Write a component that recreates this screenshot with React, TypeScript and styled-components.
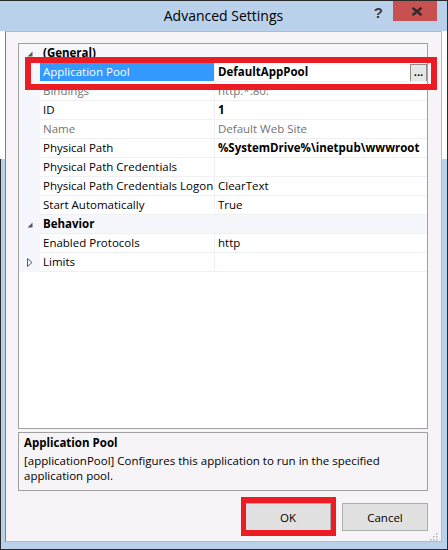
import React from "react";
import styled, { createGlobalStyle } from "styled-components";

const FONT = `"Open Sans", "Noto Sans", "DejaVu Sans", sans-serif`;

const GlobalStyle = createGlobalStyle`
  html, body { margin: 0; padding: 0; background: #ffffff; }
  body { font-family: ${FONT}; }
  * { box-sizing: border-box; }
`;

const Window = styled.div`
  position: relative;
  width: 448px;
  height: 550px;
  display: flex;
  flex-direction: column;
  border-top: 1px solid #2b2b2b;
  border-right: 1px solid #2b2b2b;
  border-bottom: 1px solid #2b2b2b;
  background:
    linear-gradient(#2b2b2b, #2b2b2b) 0 158px / 1px 100% no-repeat,
    linear-gradient(#ffffff, #ffffff) 0 30px / 5px 128px no-repeat,
    linear-gradient(#ffffff, #ffffff) right 30px / 5px 128px no-repeat,
    #b9d1ea;
  font-family: ${FONT};
  color: #000;
`;

const TitleBar = styled.div`
  flex: none;
  height: 30px;
  display: grid;
  grid-template-columns: 1fr auto 1fr;
  align-items: start;
`;

const Title = styled.div`
  grid-column: 2;
  font-size: 14px;
  line-height: 29px;
  color: #000;
`;

const Controls = styled.div`
  grid-column: 3;
  justify-self: end;
  display: flex;
  align-items: flex-start;
  gap: 10px;
  padding-right: 10px;
`;

const Help = styled.span`
  font-family: "Liberation Sans", Arial, sans-serif;
  font-weight: 700;
  font-size: 15px;
  line-height: 15px;
  padding-top: 4px;
  color: #3a3a3a;
`;

const CloseButton = styled.div`
  width: 44px;
  height: 20px;
  background: #c75050;
  display: flex;
  align-items: center;
  justify-content: center;
  padding-left: 3px;
`;

const Content = styled.div`
  position: relative;
  flex: 1;
  margin: 0 5px 7px 5px;
  border: 1px solid #a9bdd4;
  border-left-color: #6f8199;
  background: #f7f4f7;
  padding: 11px 13px 10px 12px;
  display: flex;
  flex-direction: column;
`;

const Grid = styled.div`
  flex: none;
  height: 386px;
  border: 1px solid #a0a0a0;
  background: #ffffff;
  font-size: 11.5px;
  line-height: 18px;
`;

const Row = styled.div<{ $category?: boolean }>`
  display: grid;
  grid-template-columns: ${(p) => (p.$category ? "21px 1fr" : "21px 175px 1fr")};
  height: 19px;
`;

const Gutter = styled.div`
  background: #f6f7fc;
  display: flex;
  align-items: center;
  justify-content: center;
  padding-left: 1px;
`;

const CategoryCell = styled.div`
  background: #f6f7fc;
  border-bottom: 1px solid #eef0f5;
  padding-left: 3px;
  font-weight: 700;
  white-space: nowrap;
`;

const NameCell = styled.div<{ $selected?: boolean; $muted?: boolean }>`
  border-bottom: 1px solid #eef0f5;
  border-right: 1px solid #eef0f5;
  padding-left: 3px;
  white-space: nowrap;
  overflow: hidden;
  background: ${(p) => (p.$selected ? "#3399ff" : "transparent")};
  color: ${(p) => (p.$selected ? "#ffffff" : p.$muted ? "#737373" : "#000000")};
`;

const ValueCell = styled.div<{ $bold?: boolean; $muted?: boolean }>`
  display: flex;
  justify-content: space-between;
  align-items: flex-start;
  border-bottom: 1px solid #eef0f5;
  padding-left: 3px;
  white-space: nowrap;
  overflow: hidden;
  font-weight: ${(p) => (p.$bold ? 700 : 400)};
  color: ${(p) => (p.$muted ? "#737373" : "#000000")};
`;

const EllipsisButton = styled.div`
  width: 17px;
  height: 18px;
  margin-top: 1px;
  border: 1px solid #8c8c8c;
  background: #e6e6e6;
  font-weight: 700;
  font-size: 11px;
  line-height: 13px;
  text-align: center;
  color: #000;
`;

const Description = styled.div`
  flex: none;
  margin-top: 3px;
  height: 59px;
  border: 1px solid #a0a0a0;
  padding: 2px 5px 0 5px;
  font-size: 11.5px;
  line-height: 15px;
`;

const DescTitle = styled.div`
  font-weight: 700;
  margin-bottom: 3px;
`;

const DescText = styled.div`
  color: #000;
`;

const ButtonRow = styled.div`
  flex: none;
  display: flex;
  justify-content: flex-end;
  gap: 11px;
  margin-top: 12px;
`;

const Button = styled.button`
  width: 86px;
  height: 28px;
  border: 1px solid #adadad;
  background: #e1e1e1;
  font-family: ${FONT};
  font-size: 11.5px;
  color: #000;
  padding: 0;
`;

const Highlight = styled.div<{ $left: number; $top: number; $w: number; $h: number; $bw: string }>`
  position: absolute;
  left: ${(p) => p.$left}px;
  top: ${(p) => p.$top}px;
  width: ${(p) => p.$w}px;
  height: ${(p) => p.$h}px;
  border-style: solid;
  border-color: #ec1c24;
  border-width: ${(p) => p.$bw};
  pointer-events: none;
`;

const Grip = styled.svg`
  position: absolute;
  right: 3px;
  bottom: 0px;
`;

const ExpandedGlyph = () => (
  <svg width="6" height="6" viewBox="0 0 6 6">
    <polygon points="5.5,0.5 5.5,5.5 0.5,5.5" fill="#5a5a5a" />
  </svg>
);

const CollapsedGlyph = () => (
  <svg width="6" height="9" viewBox="0 0 6 9">
    <polygon points="0.5,0.5 5,4.5 0.5,8.5" fill="none" stroke="#5a5a5a" strokeWidth="1" />
  </svg>
);

const CloseIcon = () => (
  <svg width="12" height="9" viewBox="0 0 12 9">
    <path d="M1.5 0.8 L10.5 8.2 M10.5 0.8 L1.5 8.2" stroke="#2b2b2b" strokeWidth="2.4" />
  </svg>
);

type PropRow =
  | { kind: "cat"; label: string }
  | {
      kind: "prop";
      name: string;
      value: string;
      bold?: boolean;
      muted?: boolean;
      selected?: boolean;
      ellipsis?: boolean;
      collapsed?: boolean;
    };

const rows: PropRow[] = [
  { kind: "cat", label: "(General)" },
  { kind: "prop", name: "Application Pool", value: "DefaultAppPool", bold: true, selected: true, ellipsis: true },
  { kind: "prop", name: "Bindings", value: "http:*:80:", muted: true },
  { kind: "prop", name: "ID", value: "1", bold: true },
  { kind: "prop", name: "Name", value: "Default Web Site", muted: true },
  { kind: "prop", name: "Physical Path", value: "%SystemDrive%\\inetpub\\wwwroot", bold: true },
  { kind: "prop", name: "Physical Path Credentials", value: "" },
  { kind: "prop", name: "Physical Path Credentials Logon", value: "ClearText" },
  { kind: "prop", name: "Start Automatically", value: "True" },
  { kind: "cat", label: "Behavior" },
  { kind: "prop", name: "Enabled Protocols", value: "http" },
  { kind: "prop", name: "Limits", value: "", collapsed: true },
];

export default function App() {
  return (
    <>
      <GlobalStyle />
      <Window>
        <TitleBar>
          <Title>Advanced Settings</Title>
          <Controls>
            <Help>?</Help>
            <CloseButton>
              <CloseIcon />
            </CloseButton>
          </Controls>
        </TitleBar>
        <Content>
          <Grid>
            {rows.map((r, i) =>
              r.kind === "cat" ? (
                <Row key={i} $category>
                  <Gutter>
                    <ExpandedGlyph />
                  </Gutter>
                  <CategoryCell>{r.label}</CategoryCell>
                </Row>
              ) : (
                <Row key={i}>
                  <Gutter>{r.collapsed ? <CollapsedGlyph /> : null}</Gutter>
                  <NameCell $selected={r.selected} $muted={r.muted}>
                    {r.name}
                  </NameCell>
                  <ValueCell $bold={r.bold} $muted={r.muted}>
                    <span>{r.value}</span>
                    {r.ellipsis ? <EllipsisButton>...</EllipsisButton> : null}
                  </ValueCell>
                </Row>
              )
            )}
          </Grid>
          <Description>
            <DescTitle>Application Pool</DescTitle>
            <DescText>
              [applicationPool] Configures this application to run in the specified application pool.
            </DescText>
          </Description>
          <ButtonRow>
            <Button>OK</Button>
            <Button>Cancel</Button>
          </ButtonRow>
          <Grip width="8" height="9" viewBox="0 0 8 9">
            <rect x="6" y="1" width="1.5" height="1.5" fill="#b0b0b0" />
            <rect x="3" y="4" width="1.5" height="1.5" fill="#b0b0b0" />
            <rect x="6" y="4" width="1.5" height="1.5" fill="#b0b0b0" />
            <rect x="0" y="7" width="1.5" height="1.5" fill="#b0b0b0" />
            <rect x="3" y="7" width="1.5" height="1.5" fill="#b0b0b0" />
            <rect x="6" y="7" width="1.5" height="1.5" fill="#b0b0b0" />
          </Grip>
        </Content>
        <Highlight $left={25} $top={56} $w={412} $h={33} $bw="6px" />
        <Highlight $left={241} $top={496} $w={95} $h={39} $bw="6px 5px" />
      </Window>
    </>
  );
}
